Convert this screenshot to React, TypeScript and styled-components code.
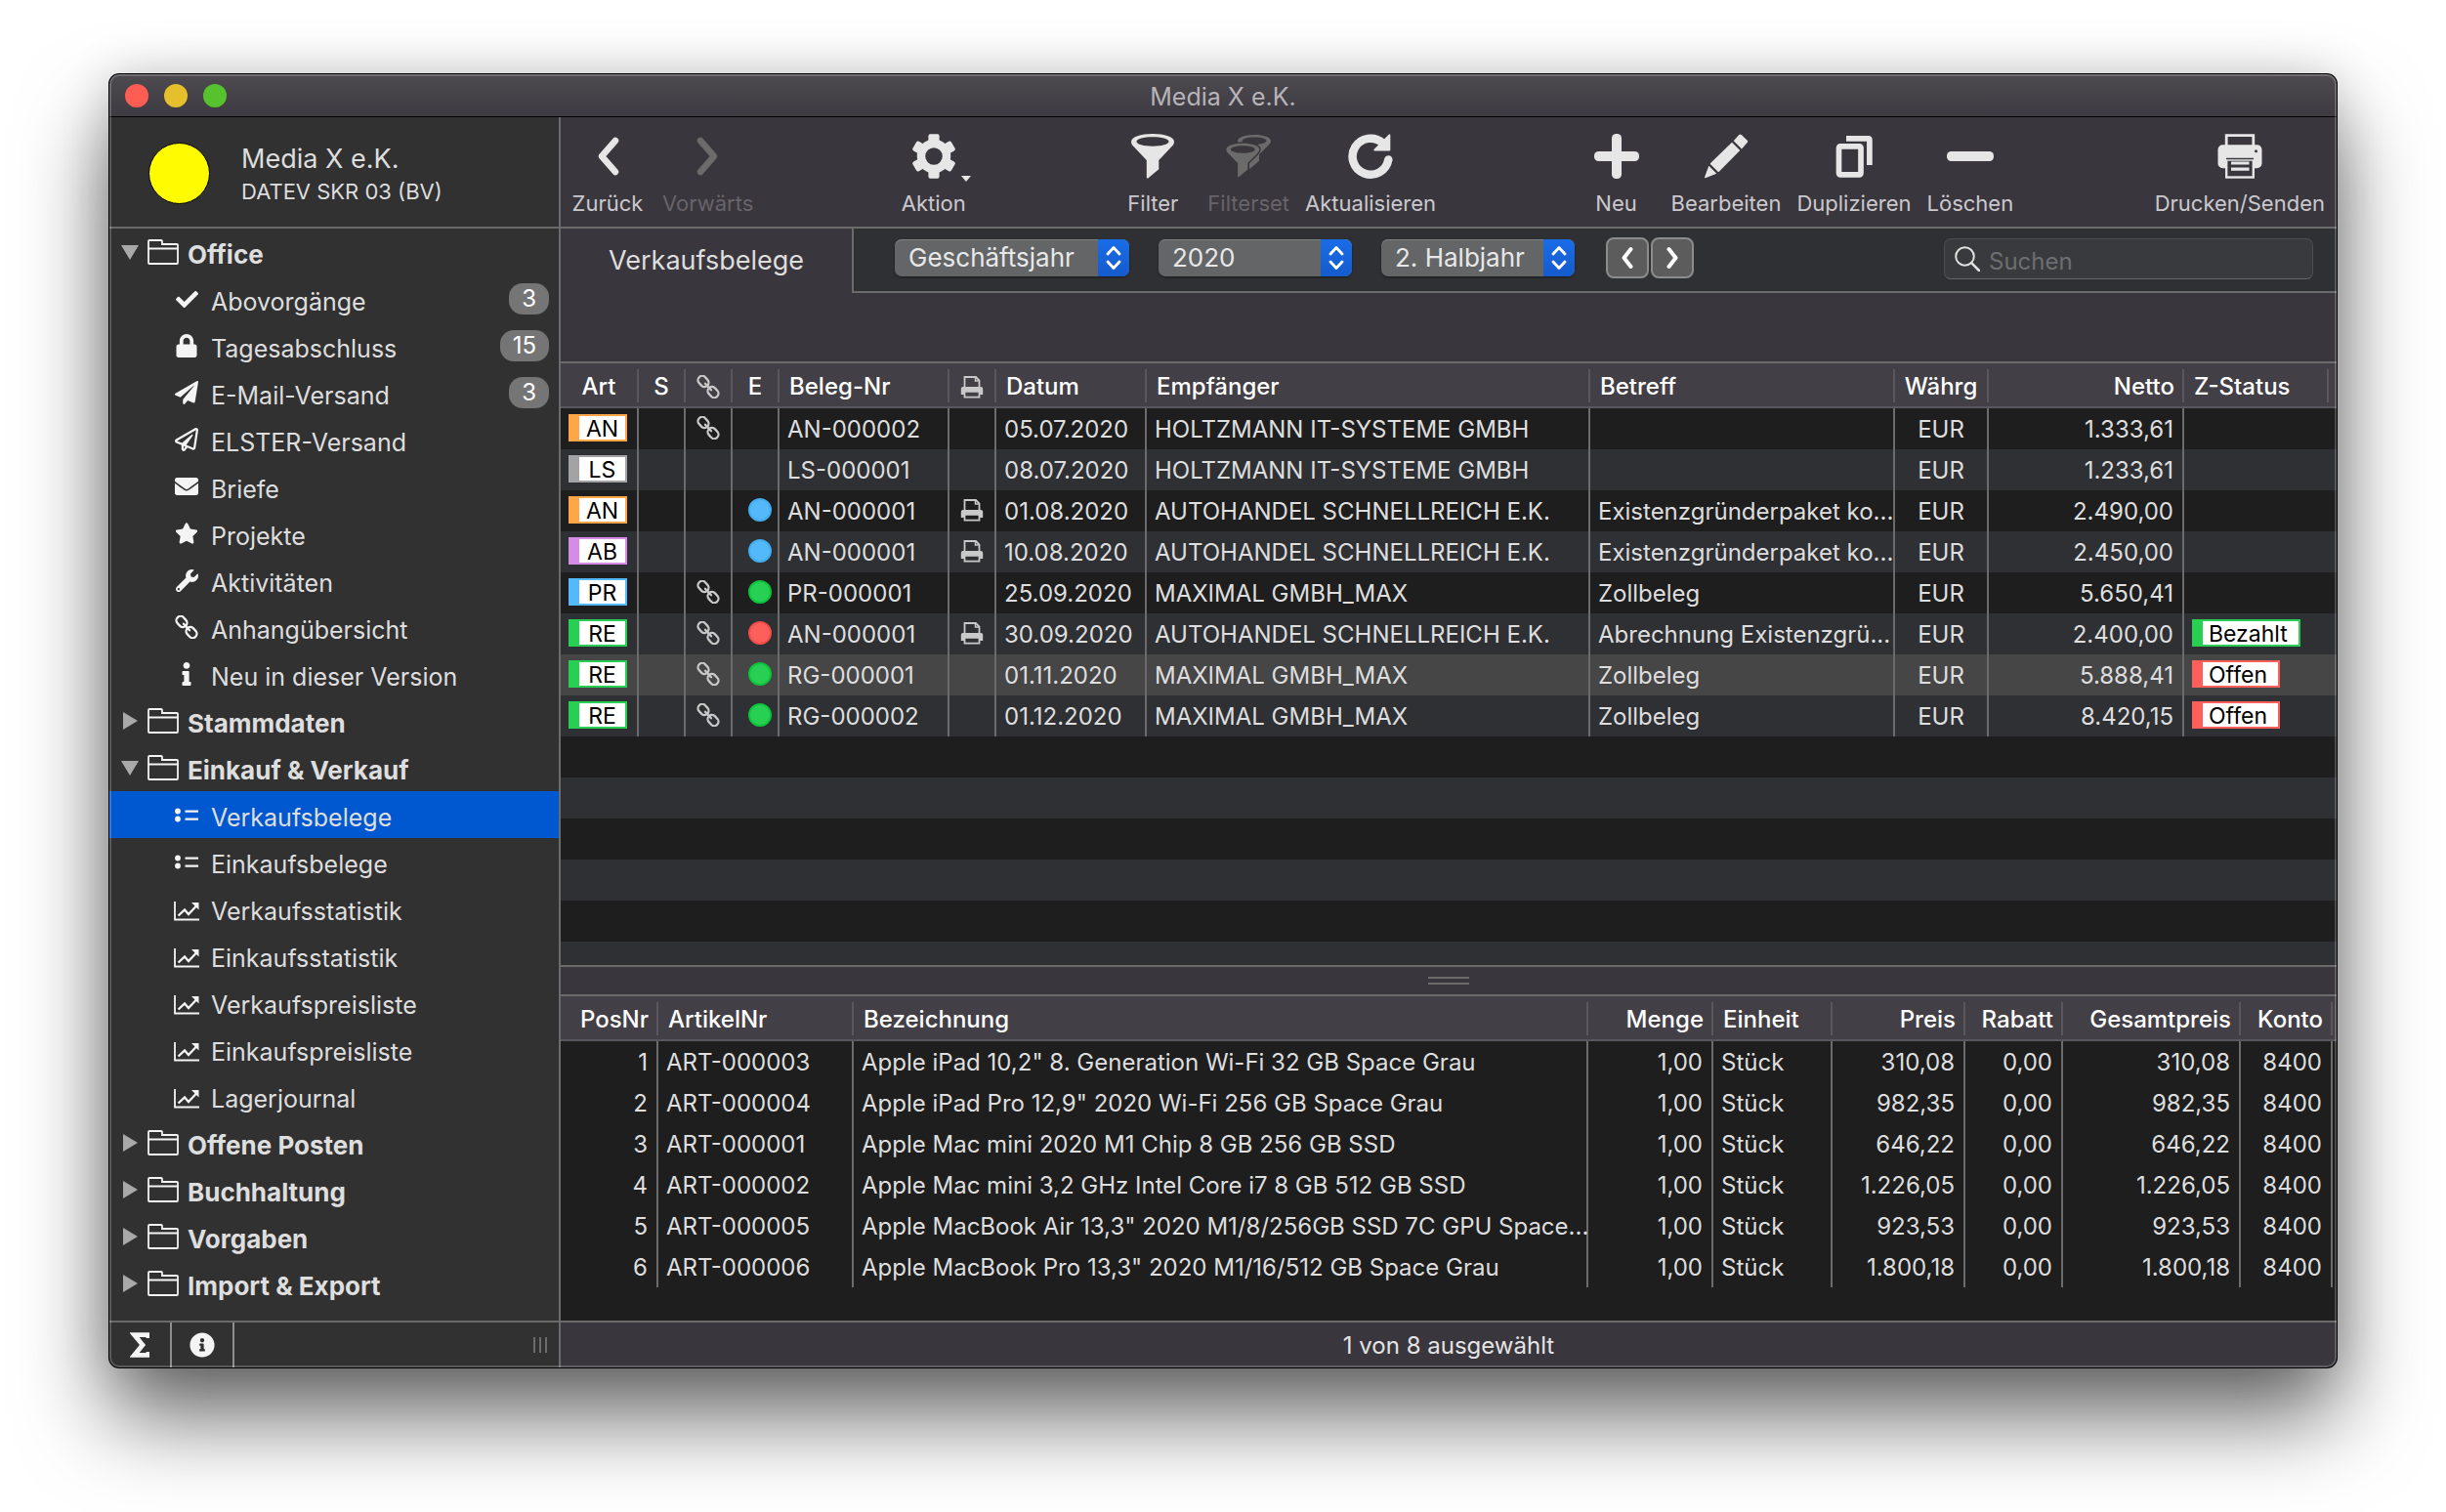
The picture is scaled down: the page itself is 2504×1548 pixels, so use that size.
import React, { useState } from "react";
import styled, { createGlobalStyle, css } from "styled-components";
import {
  FaCheck,
  FaLock,
  FaPaperPlane,
  FaRegPaperPlane,
  FaEnvelope,
  FaStar,
  FaWrench,
  FaInfo,
  FaInfoCircle,
} from "react-icons/fa";

const color = {
  line: "#6b6b6b",
  side: "#313131",
  bar: "#3a363d",
  head: "#433f46",
  headLine: "#5a565d",
  dark: "#1e1e1e",
  stripe: "#2f3034",
  text: "#dedede",
  icon: "#e6e6e6",
  blue: "#0058d0",
};

const GlobalStyle = createGlobalStyle`
  *, *::before, *::after { box-sizing: border-box; }
  body {
    margin: 0;
    background: #fff;
    font-family: Inter, Roboto, "Liberation Sans", sans-serif;
    font-size: 24px;
    color: ${color.text};
  }
  button, input, select { font: inherit; color: inherit; }
  button { background: none; border: 0; padding: 0; margin: 0; }
  a { color: inherit; text-decoration: none; }
  svg { display: block; flex: none; }
`;

/* ---------- window ---------- */

const Desktop = styled.div`
  min-height: 100vh;
  padding: 76px 112px 148px;
  display: flex;
`;

const Window = styled.div`
  position: relative;
  flex: 1;
  min-width: 0;
  display: flex;
  flex-direction: column;
  overflow: hidden;
  border-radius: 10px;
  background: ${color.bar};
  box-shadow: 0 0 0 1px #000, 0 50px 90px rgba(0, 0, 0, 0.6), 0 0 50px rgba(0, 0, 0, 0.15);
  &::after {
    content: "";
    position: absolute;
    inset: 0;
    border-radius: 10px;
    box-shadow: inset 0 0 0 2px rgba(255, 255, 255, 0.2);
    pointer-events: none;
  }
`;

const TitleBar = styled.header`
  display: grid;
  grid-template-columns: 1fr auto 1fr;
  align-items: center;
  height: 44px;
  padding: 0 16px;
  background: linear-gradient(#4d4a50, #3e3a41);
  border-bottom: 1px solid #000;
`;

const Title = styled.h1`
  margin: 0;
  padding-top: 2px;
  font-size: 25px;
  font-weight: 400;
  line-height: 32px;
  color: #b6b4b9;
`;

const Lights = styled.div`
  display: flex;
  gap: 16px;
`;

const Light = styled.button<{ $color: string }>`
  width: 24px;
  height: 24px;
  border-radius: 50%;
  background: ${(p) => p.$color};
`;

const Columns = styled.div`
  flex: 1;
  display: flex;
  min-height: 0;
`;

/* ---------- sidebar ---------- */

const Sidebar = styled.aside`
  flex: none;
  width: 462px;
  display: flex;
  flex-direction: column;
  background: ${color.side};
  border-right: 2px solid ${color.line};
`;

const Company = styled.div`
  display: flex;
  align-items: center;
  gap: 32px;
  height: 114px;
  padding: 2px 0 0 40px;
  border-bottom: 2px solid ${color.line};
`;

const Logo = styled.span`
  width: 63px;
  height: 63px;
  border-radius: 50%;
  border: 1px solid #000;
  background: #fffb00;
`;

const CompanyText = styled.div`
  display: flex;
  flex-direction: column;
  padding-top: 4px;
`;

const CompanyName = styled.span`
  font-size: 27px;
  line-height: 34px;
`;

const CompanyChart = styled.span`
  font-size: 22px;
  line-height: 32px;
`;

const Tree = styled.nav`
  flex: 1;
  display: flex;
  flex-direction: column;
`;

const rowBase = css`
  display: flex;
  align-items: center;
  width: 100%;
  height: 48px;
  line-height: 42px;
  text-align: left;
`;

const Group = styled.button`
  ${rowBase}
  gap: 9px;
  padding-left: 12px;
  font-size: 26px;
  font-weight: 700;
`;

const Item = styled.a<{ $active?: boolean }>`
  ${rowBase}
  gap: 12px;
  padding: 0 10px 0 66px;
  font-size: 25px;
  background: ${(p) => (p.$active ? color.blue : "transparent")};
`;

const IconSlot = styled.span<{ $w: number }>`
  flex: none;
  display: flex;
  justify-content: center;
  width: ${(p) => p.$w}px;
  color: #f4f4f4;
`;

const RowLabel = styled.span`
  flex: 1;
  padding-top: 6px;
`;

const Badge = styled.span`
  padding: 0 13px;
  border-radius: 14px;
  background: #757575;
  color: #fff;
  font-size: 24px;
  line-height: 32px;
`;

const SideFooter = styled.div`
  display: flex;
  height: 48px;
  border-top: 2px solid ${color.line};
`;

const FootButton = styled.button`
  display: flex;
  align-items: center;
  justify-content: center;
  width: 64px;
  color: #f4f4f4;
  border-right: 2px solid #8e8e8e;
`;

const SideGrip = styled.span`
  align-self: center;
  margin-left: auto;
  margin-right: 12px;
  width: 14px;
  height: 16px;
  background: repeating-linear-gradient(90deg, ${color.line} 0 2px, transparent 2px 6px);
`;

/* ---------- main column ---------- */

const Main = styled.main`
  flex: 1;
  min-width: 0;
  display: flex;
  flex-direction: column;
`;

const Toolbar = styled.div`
  display: flex;
  height: 114px;
  padding: 16px 4px 0 0;
  border-bottom: 2px solid ${color.line};
`;

const Spacer = styled.span`
  flex: 1;
`;

const Tool = styled.button`
  display: flex;
  flex-direction: column;
  align-items: center;
  gap: 10px;
  min-width: 96px;
  padding: 0 8px;
  font-size: 22px;
  line-height: 28px;
  color: #cbc9cd;
  &:disabled {
    color: #67646a;
  }
`;

const ToolIcon = styled.span<{ $off?: boolean }>`
  position: relative;
  color: ${(p) => (p.$off ? "#6c6b6c" : color.icon)};
`;

const MenuMark = styled.svg`
  position: absolute;
  left: 52px;
  top: 44px;
`;

const TabRow = styled.div`
  display: flex;
  height: 66px;
`;

const Tab = styled.h2`
  margin: 0;
  width: 300px;
  border-right: 2px solid ${color.line};
  font-size: 27px;
  font-weight: 400;
  line-height: 66px;
  text-align: center;
`;

const FilterBar = styled.form`
  flex: 1;
  display: flex;
  align-items: center;
  padding: 0 24px 4px 42px;
  background: ${color.stripe};
  border-bottom: 2px solid ${color.line};
`;

const SelectBox = styled.label<{ $w: number }>`
  position: relative;
  width: ${(p) => p.$w}px;
  height: 38px;
  margin-right: 30px;
`;

const Select = styled.select`
  appearance: none;
  display: block;
  width: 100%;
  height: 38px;
  padding: 0 36px 0 14px;
  border: 0;
  border-radius: 7px;
  background: #646567;
  box-shadow: inset 0 1px 0 #808183, 0 1px 2px rgba(0, 0, 0, 0.5);
  font-size: 26px;
  line-height: 38px;
  color: #e8e8e8;
`;

const Stepper = styled.span`
  position: absolute;
  right: 0;
  top: 0;
  display: flex;
  align-items: center;
  justify-content: center;
  width: 32px;
  height: 38px;
  border-radius: 0 7px 7px 0;
  background: linear-gradient(#1a6ce8, #155bcc);
  color: #fff;
  pointer-events: none;
`;

const StepPair = styled.div`
  display: flex;
  gap: 2px;
  margin-left: 2px;
`;

const Step = styled.button`
  display: flex;
  align-items: center;
  justify-content: center;
  width: 44px;
  height: 42px;
  border: 2px solid #8c8c8c;
  border-radius: 8px;
  background: #5c5c5c;
  color: #fff;
`;

const Search = styled.label`
  display: flex;
  align-items: center;
  gap: 9px;
  width: 378px;
  height: 42px;
  margin: 2px 0 0 auto;
  padding-left: 10px;
  border: 1px solid #4c4d50;
  border-bottom-color: #66676a;
  border-radius: 7px;
  background: #393a3d;
`;

const SearchInput = styled.input`
  flex: 1;
  min-width: 0;
  padding: 4px 0 0;
  border: 0;
  outline: 0;
  background: none;
  font-size: 24px;
  &::placeholder {
    color: #6d6e71;
    opacity: 1;
  }
`;

const HeadGap = styled.div`
  height: 72px;
  border-bottom: 2px solid ${color.line};
`;

/* ---------- tables ---------- */

const ListPane = styled.section`
  flex: 1;
  display: flex;
  flex-direction: column;
`;

const EmptyRows = styled.div`
  flex: 1;
  background: repeating-linear-gradient(${color.dark} 0 42px, ${color.stripe} 42px 84px);
`;

const Table = styled.table<{ $striped?: boolean }>`
  table-layout: fixed;
  width: 100%;
  border-spacing: 0;
  background: ${color.dark};
  ${(p) =>
    p.$striped &&
    css`
      tbody tr:nth-child(even) {
        background: ${color.stripe};
      }
    `}
`;

const Row = styled.tr<{ $selected?: boolean }>`
  ${(p) =>
    p.$selected &&
    css`
      && {
        background: #464646;
      }
    `}
`;

type Align = "left" | "center" | "right";

const Th = styled.th<{ $align?: Align; $plain?: boolean }>`
  height: 46px;
  padding: 4px 10px 0;
  ${(p) => p.$align === "center" && "padding-left: 2px; padding-right: 4px;"}
  border-bottom: 2px solid ${color.headLine};
  background: ${(p) =>
      p.$plain ? "none" : "linear-gradient(#5b575e, #5b575e) right 6px / 2px 34px no-repeat"},
    ${color.head};
  font-weight: 500;
  line-height: 40px;
  text-align: ${(p) => p.$align || "left"};
  white-space: nowrap;
  color: #fff;
  svg {
    margin: 0 auto;
    color: #c9c9c9;
  }
`;

const Td = styled.td<{ $align?: Align; $plain?: boolean; $graphic?: boolean }>`
  height: 42px;
  padding: ${(p) => (p.$graphic ? "0 0 2px 8px" : "2px 0 0 8px")};
  ${(p) => p.$align === "right" && "padding-right: 9px;"}
  ${(p) => p.$align === "center" && "padding-left: 0;"}
  border-right: ${(p) => (p.$plain ? "0" : `2px solid ${color.line}`)};
  line-height: 40px;
  text-align: ${(p) => p.$align || "left"};
  white-space: nowrap;
  svg {
    margin: 0 auto;
    color: #c9c9c9;
  }
`;

const Tag = styled.span<{ $color: string; $wide?: boolean }>`
  display: block;
  width: ${(p) => (p.$wide ? "max-content" : "60px")};
  height: 28px;
  padding: ${(p) => (p.$wide ? "0 11px 0 6px" : "0")};
  border: 2px solid ${(p) => p.$color};
  border-left-width: 11px;
  background: #fff;
  color: #000;
  font-size: 23px;
  line-height: 26px;
  text-align: center;
`;

const Dot = styled.span<{ $color: string; $edge: string }>`
  display: block;
  width: 24px;
  height: 24px;
  margin-left: 16px;
  border-radius: 50%;
  border: 2px solid ${(p) => p.$edge};
  background: ${(p) => p.$color};
`;

const Splitter = styled.div`
  display: flex;
  align-items: center;
  justify-content: center;
  height: 32px;
  border-top: 2px solid ${color.line};
  border-bottom: 2px solid ${color.line};
`;

const SplitGrip = styled.span`
  width: 42px;
  height: 8px;
  border-top: 2px solid ${color.line};
  border-bottom: 2px solid ${color.line};
`;

const DetailPane = styled.section`
  padding-bottom: 34px;
  background: ${color.dark};
`;

const StatusBar = styled.footer`
  height: 48px;
  padding-top: 2px;
  border-top: 2px solid ${color.line};
  line-height: 44px;
  text-align: center;
  color: #e4e4e4;
`;

/* ---------- icons ---------- */

const Svg48 = ({ children }: { children: React.ReactNode }) => (
  <svg width="48" height="48" viewBox="0 0 48 48" fill="currentColor" aria-hidden="true">
    {children}
  </svg>
);

const chevron = (d: string) => (
  <Svg48>
    <path d={d} fill="none" stroke="currentColor" strokeWidth="6.5" strokeLinecap="round" strokeLinejoin="round" />
  </Svg48>
);

const GearIcon = () => (
  <Svg48>
    <circle cx="24" cy="24" r="13" fill="none" stroke="currentColor" strokeWidth="8.5" />
    {[0, 60, 120, 180, 240, 300].map((a) => (
      <path
        key={a}
        transform={`rotate(${a} 24 24)`}
        d="M18.4 10V3.2q0-2 2-2h7.2q2 0 2 2V10z"
      />
    ))}
  </Svg48>
);

const FilterIcon = () => (
  <Svg48>
    <path
      fillRule="evenodd"
      d="M24 1C36 1 46 4 46 9c0 2-1 3.500-2 4.500L30.300 28v9.300L19.500 46.300q-1.700 1-1.700-1V28L4 13.500C3 12.500 2 11 2 9 2 4 12 1 24 1zM24 4.300C15 4.300 7.500 6.300 7.500 9s7.500 4.700 16.500 4.700S40.500 11.700 40.500 9 33 4.300 24 4.300z"
    />
  </Svg48>
);

const smallFunnel =
  "M18.300 10.700c9.200 0 17 2.300 17 6.300 0 1.500-.8 2.600-1.600 3.500L23.300 31v6.500L14.500 45q-1.400 1-1.400-.8V31L2.900 20.500c-.8-.9-1.600-2-1.600-3.500 0-4 7.800-6.300 17-6.300zm0 2.600c-7 0-12.500 1.600-12.500 3.700s5.500 3.700 12.500 3.700 12.500-1.600 12.500-3.700-5.500-3.700-12.500-3.700z";

const FilterSetIcon = () => (
  <Svg48>
    <path fillRule="evenodd" d={smallFunnel} transform="translate(11.700 -8.700)" />
    <path d={smallFunnel.split("zm")[0] + "z"} fill={color.bar} stroke={color.bar} strokeWidth="3" />
    <path fillRule="evenodd" d={smallFunnel} />
  </Svg48>
);

const RefreshIcon = () => (
  <Svg48>
    <path
      d="M42.300 27.500A18.500 18.500 0 1 1 36.500 10.500"
      fill="none"
      stroke="currentColor"
      strokeWidth="8.500"
      strokeLinecap="round"
    />
    <path d="M42.700 1.800q1.600-1.300 1.600.8v15q0 .8-.8.8h-15q-2 0-.8-1.600z" />
  </Svg48>
);

const PlusIcon = () => (
  <Svg48>
    <rect x="1" y="19" width="46" height="10" rx="4.500" />
    <rect x="19" y="1" width="10" height="46" rx="4.500" />
  </Svg48>
);

const MinusIcon = () => (
  <Svg48>
    <rect x="0" y="19" width="48" height="10" rx="4.500" />
  </Svg48>
);

const PencilIcon = () => (
  <Svg48>
    <path d="M37.300 2q1.200-1 2.400 0l6 5.800q1 1.100 0 2.300L40 16.500 31.700 8.300z" />
    <path d="M30 9.700l8.300 8.300-21.500 21.800q-.6.500-1.200 0l-7.500-7.500q-.5-.6 0-1.200z" />
    <path d="M6.300 33.700l8 8L2.800 46.300q-1 .2-.8-.8z" />
  </Svg48>
);

const DuplicateIcon = () => (
  <Svg48>
    <g fill="none" stroke="currentColor" strokeWidth="5.700">
      <rect x="8.500" y="13.800" width="22.500" height="29" rx="1.500" />
      <path d="M16 5.800H38.500q1.400 0 1.400 1.400V33" />
    </g>
  </Svg48>
);

const PrinterIcon = () => (
  <Svg48>
    <path d="M10.200 13V2.600H37.800V13" fill="none" stroke="currentColor" strokeWidth="2.800" />
    <rect x="1.500" y="12.300" width="45" height="24" rx="5" />
    <rect x="10.200" y="27.500" width="27.600" height="18" fill={color.bar} stroke="currentColor" strokeWidth="2.400" />
    <path d="M10 26.500H38" stroke={color.bar} strokeWidth="1.600" />
    <path d="M15 31H33.500M15 37.200H33.500" stroke="currentColor" strokeWidth="3.200" />
    <circle cx="40.500" cy="18.700" r="1.500" fill={color.bar} />
  </Svg48>
);

const LinkIcon = () => (
  <svg width="24" height="24" viewBox="0 0 24 24" fill="none" stroke="currentColor" strokeWidth="2.300" aria-hidden="true">
    <g transform="rotate(48 12 12)">
      <rect x="-1.500" y="7.700" width="12" height="8.600" rx="4.200" />
      <rect x="13.500" y="7.700" width="12" height="8.600" rx="4.200" />
      <path d="M7.500 12h9" strokeLinecap="round" />
    </g>
  </svg>
);

const SmallPrinterIcon = () => (
  <svg width="24" height="24" viewBox="0 0 24 24" aria-hidden="true">
    <path d="M4.500 13V2H16l3.500 3.500V13" fill="none" stroke="currentColor" strokeWidth="1.800" />
    <path d="M15.500 2v4h4" fill="none" stroke="currentColor" strokeWidth="1.500" />
    <path d="M.8 20v-6q0-2 2-2h18.400q2 0 2 2v6h-3.400v-2.500H4.200V20z" fill="currentColor" />
    <path d="M4 15.500h16" stroke="currentColor" strokeWidth="4" />
    <path d="M4.500 17v5.700h15V17" fill="none" stroke="currentColor" strokeWidth="1.800" />
  </svg>
);

const FolderIcon = () => (
  <svg width="32" height="26" viewBox="0 0 32 26" fill="none" stroke="currentColor" strokeWidth="1.800" aria-hidden="true">
    <path d="M1 24V2q0-1 1-1h12q1 0 1 1v3h15q1 0 1 1v18q0 1-1 1H2q-1 0-1-1zM1 9.500h30" />
  </svg>
);

const ListIcon = () => (
  <svg width="24" height="24" viewBox="0 0 24 24" fill="currentColor" aria-hidden="true">
    <circle cx="3" cy="8.500" r="2.900" />
    <circle cx="3" cy="16.500" r="2.900" />
    <path d="M10.500 7.500h13.500v2.200H10.500zM10.500 15.500h13.500v2.200H10.500z" />
  </svg>
);

const ChartIcon = () => (
  <svg width="26" height="26" viewBox="0 -6 26 26" fill="none" stroke="currentColor" strokeWidth="2" aria-hidden="true">
    <path d="M1 0v18.500h25" strokeWidth="1.800" />
    <path d="M4.500 14.500l6.500-6 4 4.500L23 4.500" strokeWidth="2.300" />
    <path d="M18 1h7.500v7.500z" fill="currentColor" stroke="none" />
  </svg>
);

const Triangle = ({ open }: { open: boolean }) => (
  <svg width="18" height="18" viewBox="0 0 18 18" fill="#a9a9a9" aria-hidden="true">
    <path d={open ? "M0 2h18l-9 15z" : "M2 0l15 9-15 9z"} />
  </svg>
);

const SmallChevron = ({ d }: { d: string }) => (
  <svg width="20" height="26" viewBox="0 0 20 26" fill="none" stroke="currentColor" strokeWidth="4" strokeLinecap="round" strokeLinejoin="round" aria-hidden="true">
    <path d={d} />
  </svg>
);

const UpDown = () => (
  <svg width="16" height="26" viewBox="0 0 16 26" fill="none" stroke="currentColor" strokeWidth="2.800" strokeLinecap="round" strokeLinejoin="round" aria-hidden="true">
    <path d="M2 9l6-6.500L14 9M2 17l6 6.500L14 17" />
  </svg>
);

const SearchIcon = () => (
  <svg width="26" height="26" viewBox="0 0 26 26" fill="none" stroke="#e0e0e0" strokeWidth="2" strokeLinecap="round" aria-hidden="true">
    <circle cx="10.500" cy="10.500" r="9.300" />
    <path d="M17.200 17.200L25 25" strokeWidth="2.600" />
  </svg>
);

const SigmaIcon = () => (
  <svg width="20" height="26" viewBox="0 0 20 26" fill="none" stroke="currentColor" strokeWidth="4.800" aria-hidden="true">
    <path d="M19 6V2.600H4.500L13 13 4.500 23.400H19V20" />
  </svg>
);

/* ---------- data ---------- */

type Entry = { label: string; icon: React.ReactNode; badge?: number };
type Section = { label: string; open: boolean; items: Entry[] };

const sections: Section[] = [
  {
    label: "Office",
    open: true,
    items: [
      { label: "Abovorgänge", icon: <FaCheck size={23} />, badge: 3 },
      { label: "Tagesabschluss", icon: <FaLock size={24} />, badge: 15 },
      { label: "E-Mail-Versand", icon: <FaPaperPlane size={24} />, badge: 3 },
      { label: "ELSTER-Versand", icon: <FaRegPaperPlane size={24} /> },
      { label: "Briefe", icon: <FaEnvelope size={24} /> },
      { label: "Projekte", icon: <FaStar size={24} /> },
      { label: "Aktivitäten", icon: <FaWrench size={23} /> },
      { label: "Anhangübersicht", icon: <LinkIcon /> },
      { label: "Neu in dieser Version", icon: <FaInfo size={24} /> },
    ],
  },
  { label: "Stammdaten", open: false, items: [] },
  {
    label: "Einkauf & Verkauf",
    open: true,
    items: [
      { label: "Verkaufsbelege", icon: <ListIcon /> },
      { label: "Einkaufsbelege", icon: <ListIcon /> },
      { label: "Verkaufsstatistik", icon: <ChartIcon /> },
      { label: "Einkaufsstatistik", icon: <ChartIcon /> },
      { label: "Verkaufspreisliste", icon: <ChartIcon /> },
      { label: "Einkaufspreisliste", icon: <ChartIcon /> },
      { label: "Lagerjournal", icon: <ChartIcon /> },
    ],
  },
  { label: "Offene Posten", open: false, items: [] },
  { label: "Buchhaltung", open: false, items: [] },
  { label: "Vorgaben", open: false, items: [] },
  { label: "Import & Export", open: false, items: [] },
];

const kinds: Record<string, string> = {
  AN: "#ffa748",
  LS: "#a3a3a5",
  AB: "#d48ce4",
  PR: "#53b9fb",
  RE: "#27d052",
};

const dots: Record<string, [string, string]> = {
  blue: ["#53b9fb", "#42aeee"],
  green: ["#27d052", "#0cc43c"],
  red: ["#ff5f5a", "#f04e49"],
};

type Receipt = {
  kind: string;
  link?: boolean;
  dot?: string;
  nr: string;
  printed?: boolean;
  date: string;
  to: string;
  subject: string;
  net: string;
  status?: string;
};

const holtz = "HOLTZMANN IT-SYSTEME GMBH";
const auto = "AUTOHANDEL SCHNELLREICH E.K.";
const maxi = "MAXIMAL GMBH_MAX";

const receipts: Receipt[] = [
  { kind: "AN", link: true, nr: "AN-000002", date: "05.07.2020", to: holtz, subject: "", net: "1.333,61" },
  { kind: "LS", nr: "LS-000001", date: "08.07.2020", to: holtz, subject: "", net: "1.233,61" },
  { kind: "AN", dot: "blue", nr: "AN-000001", printed: true, date: "01.08.2020", to: auto, subject: "Existenzgründerpaket ko...", net: "2.490,00" },
  { kind: "AB", dot: "blue", nr: "AN-000001", printed: true, date: "10.08.2020", to: auto, subject: "Existenzgründerpaket ko...", net: "2.450,00" },
  { kind: "PR", link: true, dot: "green", nr: "PR-000001", date: "25.09.2020", to: maxi, subject: "Zollbeleg", net: "5.650,41" },
  { kind: "RE", link: true, dot: "red", nr: "AN-000001", printed: true, date: "30.09.2020", to: auto, subject: "Abrechnung Existenzgrü...", net: "2.400,00", status: "Bezahlt" },
  { kind: "RE", link: true, dot: "green", nr: "RG-000001", date: "01.11.2020", to: maxi, subject: "Zollbeleg", net: "5.888,41", status: "Offen" },
  { kind: "RE", link: true, dot: "green", nr: "RG-000002", date: "01.12.2020", to: maxi, subject: "Zollbeleg", net: "8.420,15", status: "Offen" },
];

const positions: [string, string, string][] = [
  ["ART-000003", 'Apple iPad 10,2" 8. Generation Wi-Fi 32 GB Space Grau', "310,08"],
  ["ART-000004", 'Apple iPad Pro 12,9" 2020 Wi-Fi 256 GB Space Grau', "982,35"],
  ["ART-000001", "Apple Mac mini 2020 M1 Chip 8 GB 256 GB SSD", "646,22"],
  ["ART-000002", "Apple Mac mini 3,2 GHz Intel Core i7 8 GB 512 GB SSD", "1.226,05"],
  ["ART-000005", 'Apple MacBook Air 13,3" 2020 M1/8/256GB SSD 7C GPU Space...', "923,53"],
  ["ART-000006", 'Apple MacBook Pro 13,3" 2020 M1/16/512 GB Space Grau', "1.800,18"],
];

const Col = styled.col<{ $w?: number }>`
  width: ${(p) => (p.$w ? `${p.$w}px` : "auto")};
`;

/* ---------- parts ---------- */

const ToolButton = ({
  label,
  children,
  disabled,
}: {
  label: string;
  children: React.ReactNode;
  disabled?: boolean;
}) => (
  <Tool type="button" disabled={disabled}>
    <ToolIcon $off={disabled}>{children}</ToolIcon>
    {label}
  </Tool>
);

const Picker = ({ name, width, options }: { name: string; width: number; options: string[] }) => (
  <SelectBox $w={width}>
    <Select aria-label={name} defaultValue={options[0]}>
      {options.map((o) => (
        <option key={o}>{o}</option>
      ))}
    </Select>
    <Stepper>
      <UpDown />
    </Stepper>
  </SelectBox>
);

const SideNav = () => {
  const [active, setActive] = useState("Verkaufsbelege");
  const [open, setOpen] = useState<Record<string, boolean>>(
    Object.fromEntries(sections.map((s) => [s.label, s.open]))
  );
  return (
    <Tree aria-label="Bereiche">
      {sections.map((s) => (
        <React.Fragment key={s.label}>
          <Group
            type="button"
            aria-expanded={open[s.label]}
            onClick={() => setOpen({ ...open, [s.label]: !open[s.label] })}
          >
            <Triangle open={open[s.label]} />
            <IconSlot $w={32}>
              <FolderIcon />
            </IconSlot>
            <RowLabel>{s.label}</RowLabel>
          </Group>
          {open[s.label] &&
            s.items.map((it) => (
              <Item key={it.label} href="#" $active={active === it.label} onClick={() => setActive(it.label)}>
                <IconSlot $w={26}>{it.icon}</IconSlot>
                <RowLabel>{it.label}</RowLabel>
                {it.badge && <Badge>{it.badge}</Badge>}
              </Item>
            ))}
        </React.Fragment>
      ))}
    </Tree>
  );
};

const ReceiptTable = () => (
  <Table $striped>
    <colgroup>
      {[80, 48, 48, 48, 174, 48, 154, 454, 0, 96, 200, 148, 8].map((w, i) => (
        <Col key={i} $w={w} />
      ))}
    </colgroup>
    <thead>
      <tr>
        <Th $align="center">Art</Th>
        <Th $align="center">S</Th>
        <Th $align="center" aria-label="Anhang">
          <LinkIcon />
        </Th>
        <Th $align="center">E</Th>
        <Th>Beleg-Nr</Th>
        <Th $align="center" aria-label="Gedruckt">
          <SmallPrinterIcon />
        </Th>
        <Th>Datum</Th>
        <Th>Empfänger</Th>
        <Th>Betreff</Th>
        <Th $align="center">Währg</Th>
        <Th $align="right">Netto</Th>
        <Th>Z-Status</Th>
        <Th $plain />
      </tr>
    </thead>
    <tbody>
      {receipts.map((r, i) => (
        <Row key={i} $selected={i === 6}>
          <Td $graphic>
            <Tag $color={kinds[r.kind]}>{r.kind}</Tag>
          </Td>
          <Td />
          <Td $graphic $align="center">
            {r.link && <LinkIcon />}
          </Td>
          <Td $graphic $align="center">
            {r.dot && <Dot $color={dots[r.dot][0]} $edge={dots[r.dot][1]} />}
          </Td>
          <Td>{r.nr}</Td>
          <Td $graphic $align="center">
            {r.printed && <SmallPrinterIcon />}
          </Td>
          <Td>{r.date}</Td>
          <Td>{r.to}</Td>
          <Td>{r.subject}</Td>
          <Td $align="center">EUR</Td>
          <Td $align="right">{r.net}</Td>
          <Td $graphic $plain>
            {r.status && (
              <Tag $wide $color={r.status === "Offen" ? "#ff5f5a" : kinds.RE}>
                {r.status}
              </Tag>
            )}
          </Td>
          <Td $plain />
        </Row>
      ))}
    </tbody>
  </Table>
);

const PositionTable = () => (
  <Table>
    <colgroup>
      {[100, 200, 0, 128, 122, 136, 100, 182, 94, 4].map((w, i) => (
        <Col key={i} $w={w} />
      ))}
    </colgroup>
    <thead>
      <tr>
        <Th $align="right">PosNr</Th>
        <Th>ArtikelNr</Th>
        <Th>Bezeichnung</Th>
        <Th $align="right">Menge</Th>
        <Th>Einheit</Th>
        <Th $align="right">Preis</Th>
        <Th $align="right">Rabatt</Th>
        <Th $align="right">Gesamtpreis</Th>
        <Th $align="right">Konto</Th>
        <Th $plain />
      </tr>
    </thead>
    <tbody>
      {positions.map(([nr, name, price], i) => (
        <tr key={nr}>
          <Td $align="right">{i + 1}</Td>
          <Td>{nr}</Td>
          <Td>{name}</Td>
          <Td $align="right">1,00</Td>
          <Td>Stück</Td>
          <Td $align="right">{price}</Td>
          <Td $align="right">0,00</Td>
          <Td $align="right">{price}</Td>
          <Td $align="right">8400</Td>
          <Td $plain />
        </tr>
      ))}
    </tbody>
  </Table>
);

export default function App() {
  return (
    <>
      <GlobalStyle />
      <Desktop>
        <Window>
          <TitleBar>
            <Lights>
              <Light type="button" aria-label="Schließen" $color="#ff5c54" />
              <Light type="button" aria-label="Minimieren" $color="#e6c02c" />
              <Light type="button" aria-label="Maximieren" $color="#55c22e" />
            </Lights>
            <Title>Media X e.K.</Title>
          </TitleBar>
          <Columns>
            <Sidebar>
              <Company>
                <Logo />
                <CompanyText>
                  <CompanyName>Media X e.K.</CompanyName>
                  <CompanyChart>DATEV SKR 03 (BV)</CompanyChart>
                </CompanyText>
              </Company>
              <SideNav />
              <SideFooter>
                <FootButton type="button" aria-label="Summe">
                  <SigmaIcon />
                </FootButton>
                <FootButton type="button" aria-label="Information">
                  <FaInfoCircle size={26} />
                </FootButton>
                <SideGrip />
              </SideFooter>
            </Sidebar>
            <Main>
              <Toolbar>
                <ToolButton label="Zurück">{chevron("M32 8L18 24L32 40")}</ToolButton>
                <ToolButton label="Vorwärts" disabled>
                  {chevron("M16 8L30 24L16 40")}
                </ToolButton>
                <Spacer />
                <ToolButton label="Aktion">
                  <GearIcon />
                  <MenuMark width="10" height="6" viewBox="0 0 10 6" fill="currentColor">
                    <path d="M0 0h10L5 6z" />
                  </MenuMark>
                </ToolButton>
                <Spacer />
                <ToolButton label="Filter">
                  <FilterIcon />
                </ToolButton>
                <ToolButton label="Filterset" disabled>
                  <FilterSetIcon />
                </ToolButton>
                <ToolButton label="Aktualisieren">
                  <RefreshIcon />
                </ToolButton>
                <Spacer />
                <ToolButton label="Neu">
                  <PlusIcon />
                </ToolButton>
                <ToolButton label="Bearbeiten">
                  <PencilIcon />
                </ToolButton>
                <ToolButton label="Duplizieren">
                  <DuplicateIcon />
                </ToolButton>
                <ToolButton label="Löschen">
                  <MinusIcon />
                </ToolButton>
                <Spacer />
                <ToolButton label="Drucken/Senden">
                  <PrinterIcon />
                </ToolButton>
              </Toolbar>
              <TabRow>
                <Tab>Verkaufsbelege</Tab>
                <FilterBar>
                  <Picker name="Zeitraum" width={240} options={["Geschäftsjahr", "Kalenderjahr"]} />
                  <Picker name="Jahr" width={198} options={["2020", "2019"]} />
                  <Picker name="Abschnitt" width={198} options={["2. Halbjahr", "1. Halbjahr"]} />
                  <StepPair>
                    <Step type="button" aria-label="Zurück">
                      <SmallChevron d="M13.500 4L6.500 13L13.500 22" />
                    </Step>
                    <Step type="button" aria-label="Weiter">
                      <SmallChevron d="M6.500 4L13.500 13L6.500 22" />
                    </Step>
                  </StepPair>
                  <Search>
                    <SearchIcon />
                    <SearchInput type="search" placeholder="Suchen" aria-label="Suchen" />
                  </Search>
                </FilterBar>
              </TabRow>
              <HeadGap />
              <ListPane>
                <ReceiptTable />
                <EmptyRows />
              </ListPane>
              <Splitter>
                <SplitGrip />
              </Splitter>
              <DetailPane>
                <PositionTable />
              </DetailPane>
              <StatusBar>1 von 8 ausgewählt</StatusBar>
            </Main>
          </Columns>
        </Window>
      </Desktop>
    </>
  );
}
